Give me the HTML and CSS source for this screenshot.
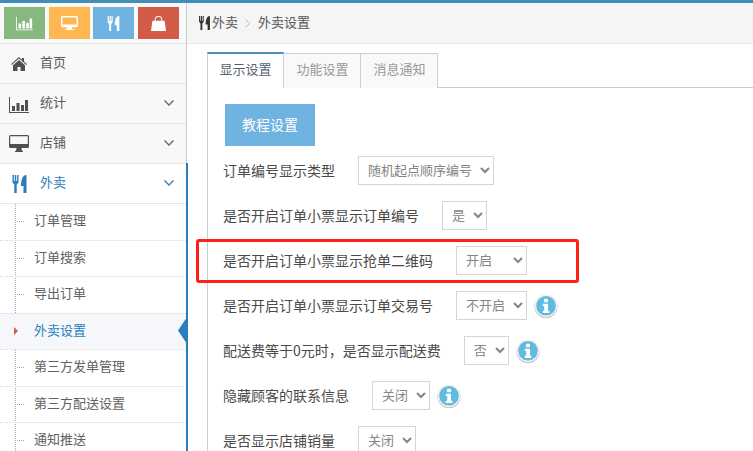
FILE: index.html
```html
<!DOCTYPE html>
<html lang="zh">
<head>
<meta charset="utf-8">
<title>外卖设置</title>
<link rel="stylesheet" href="styles.css">
</head>
<body>
<div class="topbar"></div>
<div class="layout">
  <aside class="sidebar">
    <div class="shortcuts">
      <a class="sc sc-green"><svg viewBox="0 0 20 16" class="sc-icon"><path d="M0 0h1v15h19v1H0z"/><path d="M3 8h3v6H3zM7.500 5h3v9h-3zM12 7h3v7h-3zM16 2h3v12h-3z"/></svg></a>
      <a class="sc sc-yellow"><svg viewBox="0 0 18 16" class="sc-icon"><path d="M1.500 0h15A1.500 1.500 0 0 1 18 1.500v9a1.500 1.500 0 0 1-1.500 1.500h-5l.5 2h2v1H4v-1h2l.5-2h-5A1.500 1.500 0 0 1 0 10.500v-9A1.500 1.500 0 0 1 1.500 0zM1.500 1.500v7.500h15V1.500z" fill-rule="evenodd"/></svg></a>
      <a class="sc sc-blue"><svg viewBox="0 0 14 18" class="sc-icon sc-fork"><path d="M0 0h1.400v6h.9V0h1.400v6h.9V0H6v7.500L4.200 9.500V18H1.800V9.500L0 7.500zM14 0v18h-3v-7H8.500c0-5 1-11 5.500-11z"/></svg></a>
      <a class="sc sc-red"><svg viewBox="0 0 16 16" class="sc-icon"><path d="M1.500 5H4V3.500a4 3.500 0 0 1 8 0V5h2.500L16 16H0zM5 5h6V3.500a3 2.500 0 0 0-6 0z" fill-rule="evenodd"/></svg></a>
    </div>
    <a class="item">
      <svg class="ico ico-home" viewBox="0 0 16 14"><path d="M8 0l3 2.700V1h2v3.500l3 2.700-.7.800L8 1.600.7 8 0 7.200z"/><path d="M8 3l6 5.200V14H9.500v-4h-3v4H2V8.200z"/></svg>
      <span>首页</span>
    </a>
    <a class="item">
      <svg class="ico ico-wide" viewBox="0 0 20 16"><path d="M0 0h1v15h19v1H0z"/><path d="M3 9h3v5H3zM7.500 6h3v8h-3zM12 8h3v6h-3zM16 3h3v11h-3z"/></svg>
      <span>统计</span>
      <svg class="chev" viewBox="0 0 10 6"><path d="M.5.500L5 5 9.500.500" /></svg>
    </a>
    <a class="item">
      <svg class="ico ico-desk" viewBox="0 0 20 17"><path d="M1.500 0h17A1.500 1.500 0 0 1 20 1.500v10a1.500 1.500 0 0 1-1.500 1.500h-6l.5 3h1v1H6v-1h1l.5-3h-6A1.500 1.500 0 0 1 0 11.500v-10A1.500 1.500 0 0 1 1.500 0zM1.200 1.200V9h17.600V1.200z" fill-rule="evenodd"/></svg>
      <span>店铺</span>
      <svg class="chev" viewBox="0 0 10 6"><path d="M.5.500L5 5 9.500.500" /></svg>
    </a>
    <div class="open">
      <a class="item item-open">
        <svg class="ico ico-fork" viewBox="0 0 14 18"><path d="M0 0h1.400v6h.9V0h1.400v6h.9V0H6v7.500L4.200 9.500V18H1.800V9.500L0 7.500zM14 0v18h-3v-7H8.500c0-5 1-11 5.500-11z"/></svg>
        <span>外卖</span>
        <svg class="chev" viewBox="0 0 10 6"><path d="M.5.500L5 5 9.500.500" /></svg>
      </a>
      <ul class="sub">
        <li class="sub-item"><a>订单管理</a></li>
        <li class="sub-item"><a>订单搜索</a></li>
        <li class="sub-item"><a>导出订单</a></li>
        <li class="sub-item sub-active"><a>外卖设置</a></li>
        <li class="sub-item"><a>第三方发单管理</a></li>
        <li class="sub-item"><a>第三方配送设置</a></li>
        <li class="sub-item"><a>通知推送</a></li>
      </ul>
    </div>
  </aside>
  <main class="main">
    <nav class="crumbs">
      <svg class="crumb-ico" viewBox="0 0 14 18"><path d="M0 0h1.400v6h.9V0h1.400v6h.9V0H6v7.500L4.200 9.500V18H1.800V9.500L0 7.500zM14 0v18h-3v-7H8.500c0-5 1-11 5.500-11z"/></svg>
      <span>外卖</span>
      <svg class="crumb-sep" viewBox="0 0 5 9"><path d="M.5.500L4.500 4.500.5 8.500"/></svg>
      <span>外卖设置</span>
    </nav>
    <div class="tabs-wrap">
      <ul class="tabs">
        <li class="tab tab-active">显示设置</li>
        <li class="tab">功能设置</li>
        <li class="tab">消息通知</li>
      </ul>
      <section class="pane">
        <button class="btn" type="button">教程设置</button>
        <div class="row">
          <label>订单编号显示类型</label>
          <select><option>随机起点顺序编号</option></select>
        </div>
        <div class="row">
          <label>是否开启订单小票显示订单编号</label>
          <select><option>是</option><option>否</option></select>
        </div>
        <div class="row">
          <label>是否开启订单小票显示抢单二维码</label>
          <select><option>开启</option><option>不开启</option></select>
          <div class="highlight"></div>
        </div>
        <div class="row">
          <label>是否开启订单小票显示订单交易号</label>
          <select><option>不开启</option><option>开启</option></select>
          <svg class="info" viewBox="0 0 24 24"><use href="#info"/></svg>
        </div>
        <div class="row">
          <label>配送费等于0元时，是否显示配送费</label>
          <select><option>否</option><option>是</option></select>
          <svg class="info" viewBox="0 0 24 24"><use href="#info"/></svg>
        </div>
        <div class="row">
          <label>隐藏顾客的联系信息</label>
          <select><option>关闭</option><option>开启</option></select>
          <svg class="info" viewBox="0 0 24 24"><use href="#info"/></svg>
        </div>
        <div class="row">
          <label>是否显示店铺销量</label>
          <select><option>关闭</option><option>开启</option></select>
        </div>
      </section>
    </div>
  </main>
</div>
<svg class="defs" width="0" height="0"><defs>
  <g id="info">
    <circle cx="12" cy="12.600" r="11.600" fill="#bdbdbd"/>
    <circle cx="12" cy="11.800" r="11.400" fill="#f1f1f1"/>
    <circle cx="12" cy="11.800" r="9.800" fill="#62bbde"/>
    <rect x="10" y="4.800" width="4" height="3.500" rx=".7" fill="#fff"/>
    <path d="M8.800 9.800h5.200v6.900h1.400v2.300H8.800v-2.300h1.400v-4.600H8.800z" fill="#fff"/>
  </g>
</defs></svg>
</body>
</html>
```

FILE: styles.css
```css
* { box-sizing: border-box; }
html, body { margin: 0; height: 100%; overflow: hidden; }
body {
  background: #fff;
  color: #393939;
  font-family: "Noto Sans CJK SC", "Open Sans", sans-serif;
  font-size: 13px;
}
ul { list-style: none; margin: 0; padding: 0; }
.defs { position: absolute; }

.topbar { height: 3px; background: #438eb9; }
.layout { display: flex; height: 448px; overflow: hidden; }

.sidebar {
  position: relative;
  z-index: 1;
  flex: 0 0 187px;
  background: #f8f8f8;
  border-right: 1px solid #ccc;
}
.shortcuts {
  display: flex;
  justify-content: space-between;
  width: 179px;
  height: 40px;
  padding: 4px 0 4px 4px;
}
.sc {
  display: flex;
  align-items: center;
  justify-content: center;
  width: 41px;
  height: 32px;
}
.sc-green { background: #87b87f; }
.sc-yellow { background: #ffb752; }
.sc-blue { background: #6fb3e0; }
.sc-red { background: #d15b47; }
.sc-icon { width: 17px; height: 15px; fill: #fff; }

.item {
  display: flex;
  align-items: center;
  height: 40px;
  padding-left: 40px;
  border-top: 1px solid #e5e5e5;
  color: #585858;
  position: relative;
}
.item > span { margin-bottom: 4px; }
.ico { position: absolute; fill: #4d5156; }
.ico-home { left: 11px; top: 13px; width: 16px; height: 14px; }
.ico-wide { left: 9px; top: 13px; width: 20px; height: 16px; }
.ico-desk { left: 9px; top: 11px; width: 20px; height: 17px; }
.ico-fork { left: 12px; top: 11px; width: 15px; height: 18px; fill: #2b7dbc; }
.chev {
  position: absolute;
  left: 164px;
  top: 16px;
  width: 10px;
  height: 6px;
  fill: none;
  stroke: #5a6570;
  stroke-width: 1.300;
}

.open {
  position: relative;
  margin-right: -2px;
  border-right: 2px solid #2b7dbc;
  background: #fff;
}
.item-open { color: #2b7dbc; }
.item-open .chev { stroke: #2b7dbc; }

.sub { position: relative; }
.sub::before {
  content: "";
  position: absolute;
  left: 15px;
  top: 1px;
  bottom: 0;
  border-left: 1px dotted #8fb0c9;
}
.sub-item {
  position: relative;
  display: flex;
  align-items: center;
  height: 36.5px;
  padding: 0 0 4px 34px;
  border-top: 1px dotted #d9d9d9;
  color: #616161;
}
.sub-item:first-child { border-top: 1px solid #e5e5e5; }
.sub-item::before {
  content: "";
  position: absolute;
  left: 17px;
  top: 17px;
  width: 7px;
  border-top: 1px dotted #8fb0c9;
}
.sub-active { background: #f5f7fb; color: #2b7dbc; }
.sub-active::before {
  left: 14px;
  top: 13px;
  width: 0;
  border-top: 4px solid transparent;
  border-bottom: 4px solid transparent;
  border-left: 4px solid #d15b47;
}
.sub-active::after {
  content: "";
  position: absolute;
  right: 0;
  top: 5px;
  width: 8px;
  height: 24px;
  background: #2b7dbc;
  clip-path: polygon(100% 0, 0 50%, 100% 100%);
}

.main { flex: 1; min-width: 0; }
.crumbs {
  display: flex;
  align-items: center;
  height: 41px;
  padding-left: 12px;
  background: #f5f5f5;
  border-bottom: 1px solid #e5e5e5;
  color: #555;
}
.crumbs > span { margin-bottom: 3px; }
.crumb-ico { width: 11px; height: 14px; margin-right: 2px; fill: #333; }
.crumb-sep {
  width: 5px;
  height: 9px;
  margin: 0 8px 0 7px;
  fill: none;
  stroke: #b8b8b8;
  stroke-width: 1;
}

.tabs-wrap { padding: 8px 0 0 20px; }
.tabs {
  display: flex;
  border-bottom: 1px solid #c5d0dc;
  height: 36px;
}
.tab {
  width: 77px;
  height: 35px;
  padding: 0 0 5px 1px;
  display: flex;
  align-items: center;
  justify-content: center;
  background: #f9f9f9;
  color: #999;
  border: 1px solid #c5d0dc;
  border-left: 0;
  border-bottom: 0;
}
.tab-active {
  position: relative;
  height: 36px;
  padding-left: 0;
  background: #fff;
  color: #576373;
  border-top: 2px solid #4c8fbd;
  border-left: 1px solid #c5d0dc;
}
.tab:not(.tab-active) { margin-top: 1px; }

.pane {
  border-left: 1px solid #c5d0dc;
  padding: 16px 0 0 15px;
}
.btn {
  display: block;
  width: 90px;
  height: 42px;
  margin: 0 0 10px 2px;
  padding: 0 0 2px;
  border: 0;
  background: #6fb3e0;
  color: #fff;
  font: inherit;
  font-size: 14px;
}
.row {
  position: relative;
  display: flex;
  align-items: center;
  height: 29px;
  margin-bottom: 16px;
  font-size: 14px;
  color: #4a4a4a;
}
.row label { margin: 0 23px 2px 0; }
select {
  height: 29px;
  padding: 0 4px 2px 5px;
  border: 1px solid #d5d5d5;
  border-radius: 0;
  background: #fff;
  color: #858585;
  font: inherit;
  font-size: 13px;
}
.info { width: 24px; height: 24px; margin-left: 7px; flex: none; }
.highlight {
  position: absolute;
  left: -27px;
  top: -7px;
  width: 383px;
  height: 44px;
  border: 3px solid #ff2016;
  border-radius: 3px;
}
```
